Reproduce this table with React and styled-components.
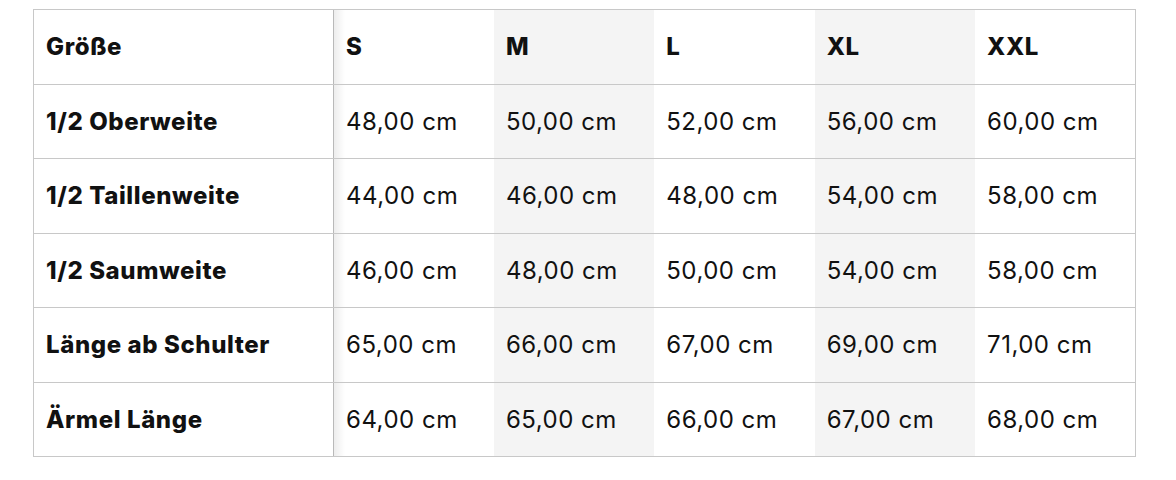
import React from "react";
import styled, { createGlobalStyle } from "styled-components";

const sizes = ["S", "M", "L", "XL", "XXL"];

const rows = [
  { label: "1/2 Oberweite", values: ["48,00", "50,00", "52,00", "56,00", "60,00"] },
  { label: "1/2 Taillenweite", values: ["44,00", "46,00", "48,00", "54,00", "58,00"] },
  { label: "1/2 Saumweite", values: ["46,00", "48,00", "50,00", "54,00", "58,00"] },
  { label: "Länge ab Schulter", values: ["65,00", "66,00", "67,00", "69,00", "71,00"] },
  { label: "Ärmel Länge", values: ["64,00", "65,00", "66,00", "67,00", "68,00"] },
];

const GlobalStyle = createGlobalStyle`
  body {
    margin: 0;
    background: #fff;
    font-family: Inter, "Noto Sans", sans-serif;
    color: #111;
  }
`;

const Wrapper = styled.div`
  padding: 9px 40px 0 33px;
`;

const Scroller = styled.div`
  overflow-x: auto;
  width: 1103px;
`;

const Table = styled.table`
  border-collapse: collapse;
  table-layout: fixed;
  width: 1103px;
  border: 1px solid #c8c8c8;
  font-size: 24px;
  line-height: 35.5px;
`;

const Row = styled.tr`
  border-bottom: 1px solid #c8c8c8;
`;

const LabelCell = styled.th`
  position: sticky;
  left: 0;
  z-index: 1;
  width: 300px;
  background: #fff;
  border-right: 1px solid #c8c8c8;
  padding: 19px 12px;
  text-align: left;
  font-weight: 800;
  letter-spacing: 0.6px;
  white-space: nowrap;

  &::after {
    content: "";
    position: absolute;
    top: 0;
    bottom: 0;
    left: 100%;
    width: 12px;
    background: linear-gradient(to right, rgba(0, 0, 0, 0.08), rgba(0, 0, 0, 0));
    pointer-events: none;
  }
`;

const Cell = styled.td`
  padding: 19px 12px;
  text-align: left;
  font-weight: ${(p) => (p.$head ? 800 : 400)};
  letter-spacing: ${(p) => (p.$head ? "0.6px" : "0.5px")};
  background: ${(p) => (p.$shaded ? "#f4f4f4" : "transparent")};
  white-space: nowrap;
`;

export default function App() {
  return (
    <Wrapper>
      <GlobalStyle />
      <Scroller>
        <Table>
          <colgroup>
            <col style={{ width: 300 }} />
            {sizes.map((s) => (
              <col key={s} />
            ))}
          </colgroup>
          <thead>
            <Row>
              <LabelCell>Größe</LabelCell>
              {sizes.map((s, i) => (
                <Cell as="th" key={s} $head $shaded={i % 2 === 1}>
                  {s}
                </Cell>
              ))}
            </Row>
          </thead>
          <tbody>
            {rows.map((row) => (
              <Row key={row.label}>
                <LabelCell scope="row">{row.label}</LabelCell>
                {row.values.map((v, i) => (
                  <Cell key={i} $shaded={i % 2 === 1}>
                    {v} cm
                  </Cell>
                ))}
              </Row>
            ))}
          </tbody>
        </Table>
      </Scroller>
    </Wrapper>
  );
}
